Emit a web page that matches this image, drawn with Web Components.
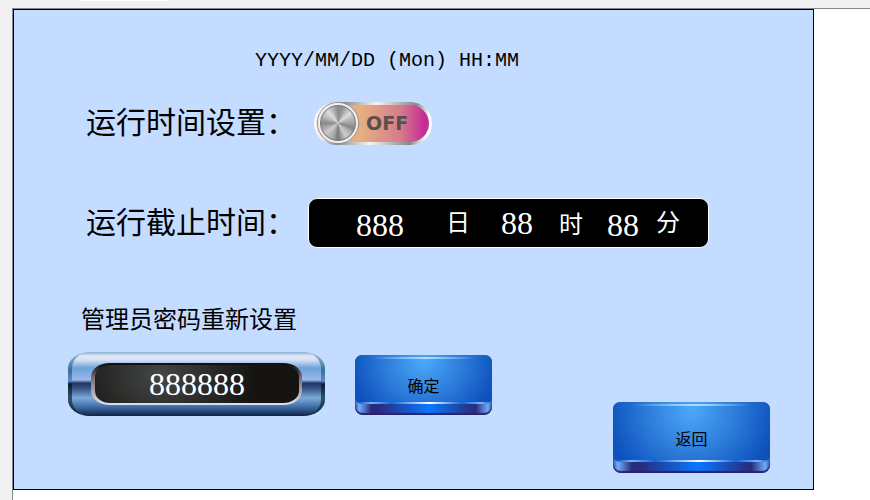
<!DOCTYPE html>
<html lang="zh-CN">
<head>
<meta charset="utf-8">
<title>运行时间设置</title>
<style>
  body {
    margin: 0;
    background: #fff;
    font-family: "Liberation Sans", "Noto Sans CJK SC", sans-serif;
    color: #000;
  }
</style>
</head>
<body>
<editor-frame>
  <hmi-screen>
    <clock-label slot="clock">YYYY/MM/DD (Mon) HH:MM</clock-label>
    <setting-row label="运行时间设置：">
      <power-switch></power-switch>
    </setting-row>
    <setting-row label="运行截止时间：" class="deadline">
      <time-display></time-display>
    </setting-row>
    <password-panel></password-panel>
  </hmi-screen>
</editor-frame>

<script>
class EditorFrame extends HTMLElement {
  constructor() {
    super();
    this.attachShadow({ mode: 'open' }).innerHTML = `
      <style>
        :host {
          display: grid;
          grid-template-columns: 12px 1fr;
          grid-template-rows: 8px auto;
          min-height: 100vh;
          background: #f0f0f0;
        }
        .tabs {
          grid-column: 1 / -1;
          display: flex;
          padding-left: 79px;
        }
        .tab {
          width: 90px;
          height: 1px;
          background: #fff;
        }
        .work {
          grid-column: 2;
          background: #fff;
          border-top: 1px solid #828790;
          border-left: 1px solid #828790;
        }
      </style>
      <div class="tabs"><div class="tab"></div></div>
      <div class="work"><slot></slot></div>
    `;
  }
}

class HmiScreen extends HTMLElement {
  constructor() {
    super();
    this.attachShadow({ mode: 'open' }).innerHTML = `
      <style>
        :host {
          display: flex;
          flex-direction: column;
          box-sizing: border-box;
          margin-right: 56px;
          padding: 36px 43px 16px 54px;
          border: 1px solid #000;
          background: #c4dcff;
        }
        ::slotted(setting-row) {
          margin-top: 25px;
        }
        ::slotted(.deadline) {
          margin-top: 53px;
        }
      </style>
      <slot name="clock"></slot>
      <slot></slot>
    `;
  }
}

class ClockLabel extends HTMLElement {
  constructor() {
    super();
    this.attachShadow({ mode: 'open' }).innerHTML = `
      <style>
        :host {
          display: block;
          padding-left: 187px;
          font-family: "Liberation Mono", monospace;
          font-size: 20px;
          line-height: 30px;
          white-space: nowrap;
        }
      </style>
      <slot></slot>
    `;
  }
}

class SettingRow extends HTMLElement {
  constructor() {
    super();
    this.attachShadow({ mode: 'open' }).innerHTML = `
      <style>
        :host {
          display: flex;
          align-items: center;
          padding-left: 18px;
        }
        .label {
          width: 222px;
          font-size: 30px;
          line-height: 44px;
          white-space: nowrap;
        }
      </style>
      <div class="label">${this.getAttribute('label')}</div>
      <slot></slot>
    `;
  }
}

class PowerSwitch extends HTMLElement {
  constructor() {
    super();
    this.attachShadow({ mode: 'open' }).innerHTML = `
      <style>
        :host {
          display: block;
          padding-left: 6px;
        }
        button {
          display: flex;
          align-items: center;
          box-sizing: border-box;
          width: 118px;
          height: 43px;
          padding: 0 0 0 1px;
          border: 3px solid transparent;
          border-radius: 22px;
          background:
            linear-gradient(90deg, #ecb878 0%, #e6ae82 40%, #d47b8c 75%, #c62c98 96%) padding-box,
            linear-gradient(100deg, #fff 0%, #eee 12%, #8c8c8c 24%, #f4f4f4 50%, #888 82%, #fff 94%) border-box;
        }
        .knob {
          flex: none;
          box-sizing: border-box;
          width: 40px;
          height: 40px;
          border: 2px solid #f0f0f0;
          border-radius: 50%;
          box-shadow: 0 0 1px 1px #8f8f8f, inset 0 0 1px 1px #777;
          background: conic-gradient(#8a8a8a, #999 20deg, #ddd 50deg, #b4b4b4 75deg, #888 110deg, #b8b8b8 130deg, #ccc 150deg, #777 180deg, #aaa 200deg, #ccc 230deg, #888 270deg, #bbb 295deg, #ddd 320deg, #8a8a8a);
        }
        .text {
          margin-left: 8px;
          font: bold 19px "DejaVu Sans", sans-serif;
          color: #58504f;
        }
      </style>
      <button type="button" role="switch" aria-checked="false" aria-label="运行时间设置">
        <span class="knob"></span><span class="text">OFF</span>
      </button>
    `;
  }
}

class TimeDisplay extends HTMLElement {
  constructor() {
    super();
    this.attachShadow({ mode: 'open' }).innerHTML = `
      <style>
        :host {
          display: flex;
          align-items: center;
          flex: 0 1 401px;
          box-sizing: border-box;
          height: 50px;
          padding-left: 47px;
          border: 1px solid #fff;
          border-radius: 9px;
          background: #000;
          color: #fff;
        }
        .num {
          font: 32px/36px "Liberation Serif", serif;
        }
        .unit {
          font-size: 24px;
          line-height: 36px;
        }
        .days { margin-right: 42px; }
        .day { margin-right: 31px; }
        .hours { margin-right: 26px; }
        .hour { margin-right: 24px; }
        .minutes { margin-right: 17px; }
        .days, .minutes, .hour { padding-top: 4px; }
      </style>
      <span class="num days">888</span><span class="unit day">日</span>
      <span class="num hours">88</span><span class="unit hour">时</span>
      <span class="num minutes">88</span><span class="unit">分</span>
    `;
  }
}

class GlossButton extends HTMLElement {
  constructor() {
    super();
    this.attachShadow({ mode: 'open' }).innerHTML = `
      <style>
        :host {
          display: block;
        }
        button {
          display: flex;
          flex-direction: column;
          width: 100%;
          height: 100%;
          padding: 0;
          border: 0;
          border-radius: 7px 7px 8px 8px;
          background: linear-gradient(90deg, #2e57ad 0%, #6db0ff 3%, #2a2b78 12%, #292b7c 17%, #0878ff 54%, #292b78 88%, #6daafa 97%, #3158aa 100%);
          box-shadow: inset 0 -2px 1px #29236e;
          font: 16px/24px "Noto Sans CJK SC", sans-serif;
          color: #000;
        }
        .face {
          flex: 1;
          display: flex;
          flex-direction: column;
          align-items: center;
          justify-content: flex-end;
          align-self: stretch;
          box-sizing: border-box;
          margin-bottom: 11px;
          padding-bottom: var(--text-rise, 7px);
          border-radius: 7px;
          background:
            linear-gradient(90deg, transparent 12%, #b4dcff 52%, transparent 88%) 0 2px / 100% 2px no-repeat,
            linear-gradient(90deg, #1458c4 2%, #75b3ff 12%, #0e69df 27%, #fff 55%, #0e69df 78%, #75b3ff 92%, #1458c4) 0 100% / 100% 2px no-repeat,
            radial-gradient(ellipse 54% 140% at 50% 12%, #4ca9fa 0%, #2e7edb 50%, #0d51bd 100%);
        }
      </style>
      <button type="button"><span class="face"><slot></slot></span></button>
    `;
  }
}

class PasswordPanel extends HTMLElement {
  constructor() {
    super();
    this.attachShadow({ mode: 'open' }).innerHTML = `
      <style>
        :host {
          display: block;
          margin-top: 54px;
        }
        label {
          display: block;
          padding-left: 13px;
          font-size: 24px;
          line-height: 36px;
        }
        .row {
          display: flex;
          align-items: flex-start;
          margin-top: 14px;
        }
        .bezel {
          box-sizing: border-box;
          width: 257px;
          height: 64px;
          padding: 11px 23px;
          border-radius: 22px / 16px;
          background: linear-gradient(#86afd0 0, #e4e8f8 4px, #d5dff5 8px, #6ca3d9 16px, #9cb8ee 28px, #253963 31px, #2c477c 35px, #7bacd8 46px, #3e6ba6 55px, #1b345c 62px, #0c2430 64px);
        }
        /* darker rim on both ends, light above the seam and dark below */
        .bezel {
          border: solid transparent;
          border-width: 0 4px;
          padding: 11px 19px;
          background:
            linear-gradient(#86afd0 0, #e4e8f8 4px, #d5dff5 8px, #6ca3d9 16px, #9cb8ee 28px, #253963 31px, #2c477c 35px, #7bacd8 46px, #3e6ba6 55px, #1b345c 62px, #0c2430 64px) padding-box,
            linear-gradient(#9cc0dc 0, #386f9c 18px, #5c8cd0 29px, #0c1c2c 32px, #2c5270 46px, #0c2430 64px) border-box;
        }
        input {
          display: block;
          box-sizing: border-box;
          width: 100%;
          height: 42px;
          padding: 0;
          border: solid transparent;
          border-width: 2px 3px 2px 4px;
          border-radius: 19px / 14px;
          background:
            radial-gradient(ellipse 95px 75px at 65px 10px, #434745, #151412) padding-box,
            linear-gradient(#111 5%, #776c74 35%, #aaa0aa 65%, #dcdcec 95%) border-box;
          font: 32px/38px "Liberation Serif", serif;
          text-align: center;
          color: #fff;
        }
        .ok {
          width: 137px;
          height: 60px;
          margin: 3px auto 0 30px;
        }
        .back {
          --text-rise: 12px;
          width: 157px;
          height: 71px;
          margin-top: 50px;
        }
      </style>
      <label for="pw">管理员密码重新设置</label>
      <div class="row">
        <div class="bezel"><input id="pw" type="text" value="888888"></div>
        <gloss-button class="ok">确定</gloss-button>
        <gloss-button class="back">返回</gloss-button>
      </div>
    `;
  }
}

customElements.define('editor-frame', EditorFrame);
customElements.define('hmi-screen', HmiScreen);
customElements.define('clock-label', ClockLabel);
customElements.define('setting-row', SettingRow);
customElements.define('power-switch', PowerSwitch);
customElements.define('time-display', TimeDisplay);
customElements.define('gloss-button', GlossButton);
customElements.define('password-panel', PasswordPanel);
</script>
</body>
</html>
